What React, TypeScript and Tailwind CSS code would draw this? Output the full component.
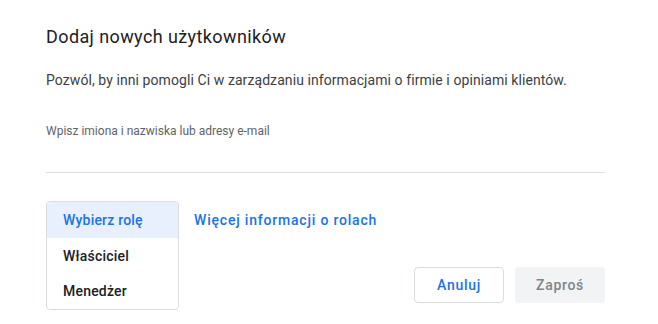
import React from "react";

export default function App() {
  return (
    <div className="w-[658px] h-[324px] bg-white overflow-hidden" style={{ fontFamily: "Roboto, 'Noto Sans', sans-serif" }}>
      <div className="pl-[46px] pr-[53px] pt-[25px]">
        <h1 className="text-[18px] leading-[24px] font-normal tracking-[0.4px] text-[#202124]">Dodaj nowych użytkowników</h1>
        <p className="mt-[21px] text-[14px] leading-[20px] tracking-[0.08px] text-[#3c4043]">
          Pozwól, by inni pomogli Ci w zarządzaniu informacjami o firmie i opiniami klientów.
        </p>
        <div className="mt-[33px] h-[50px] border-b border-[#dadce0]">
          <div className="text-[12px] leading-[16px] text-[#5f6368]">Wpisz imiona i nazwiska lub adresy e-mail</div>
        </div>
        <div className="mt-[28px] flex items-start">
          <div className="w-[133px] border border-[#dadce0] rounded-[4px] overflow-hidden">
            <div className="h-[36px] pl-[16px] flex items-center bg-[#e8f0fe] text-[#1a73e8] text-[14px] font-medium tracking-[0.2px]">Wybierz rolę</div>
            <div className="h-[36px] pl-[16px] flex items-center text-[#202124] text-[14px] font-medium tracking-[0.2px]">Właściciel</div>
            <div className="h-[35px] pl-[16px] flex items-center text-[#202124] text-[14px] font-medium tracking-[0.2px]">Menedżer</div>
          </div>
          <div className="ml-[15px] h-[38px] flex items-center text-[#1a73e8] text-[14px] font-medium tracking-[0.8px]">Więcej informacji o rolach</div>
          <div className="ml-auto mt-[66px] flex gap-[11px]">
            <button className="w-[90px] h-[36px] border border-[#dadce0] rounded-[4px] text-[#1a73e8] text-[14px] font-medium tracking-[0.7px] bg-white">Anuluj</button>
            <button className="w-[90px] h-[36px] rounded-[4px] bg-[#f1f3f4] text-[#80868b] text-[14px] font-medium tracking-[0.7px]">Zaproś</button>
          </div>
        </div>
      </div>
    </div>
  );
}
